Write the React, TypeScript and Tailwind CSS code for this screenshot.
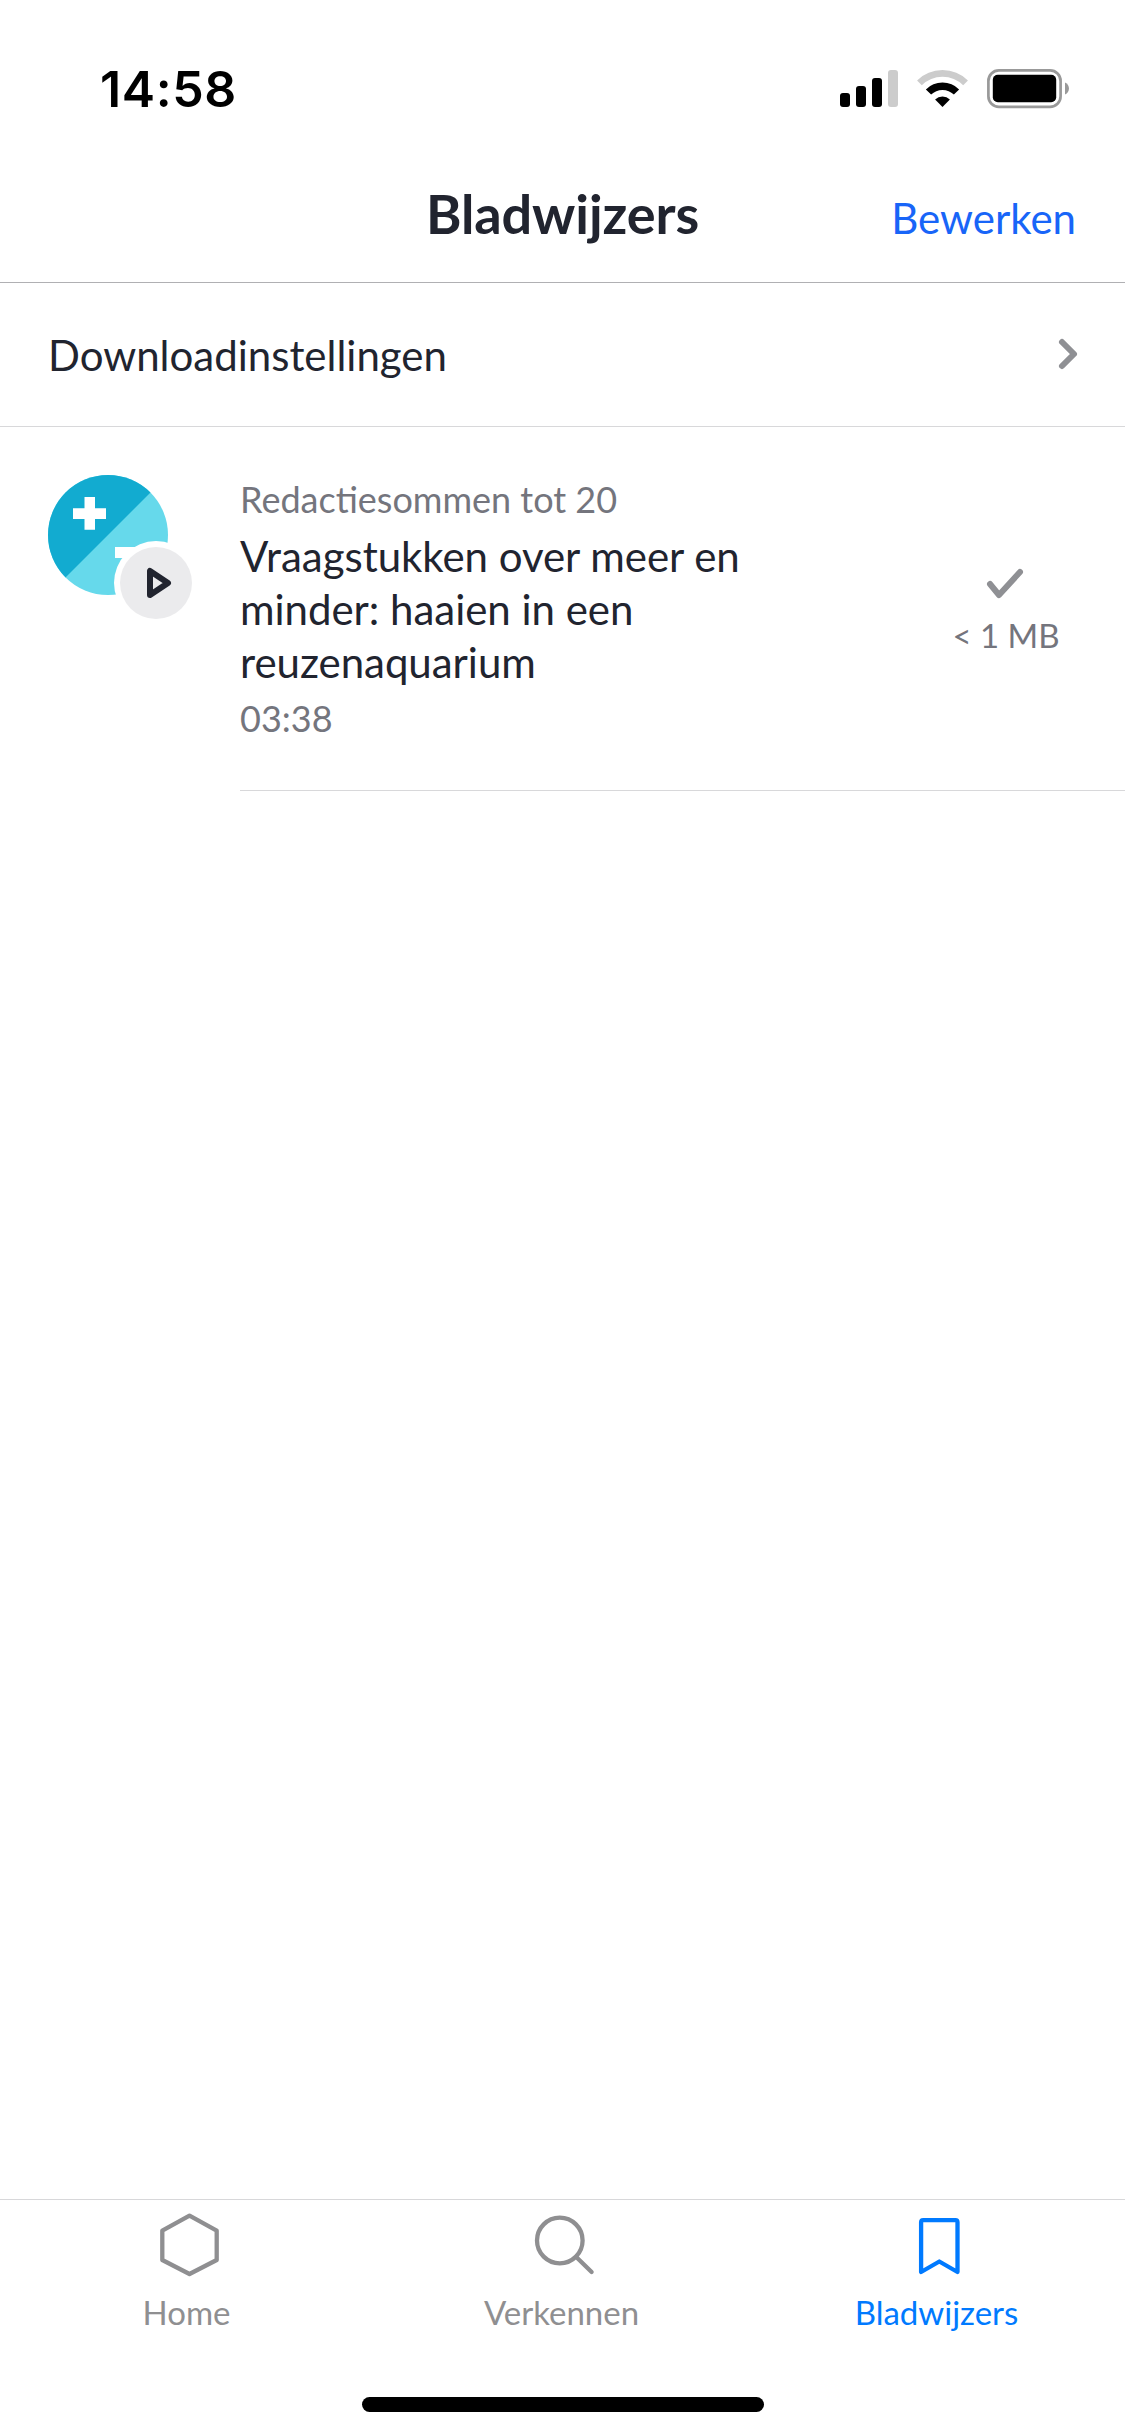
import type { ReactNode } from 'react';

function StatusBar() {
  return (
    <div className="flex h-[132px] shrink-0 items-start justify-between pl-[100px] pr-[55px] text-black">
      <span className="mt-[59px] font-['Inter',sans-serif] text-[50px] font-semibold leading-[60px] tracking-[0.6px]">14:58</span>
      <div className="mt-[69px] flex gap-[19px]">
        <svg width="58" height="40" viewBox="0 0 58 40">
          <rect x="0" y="24" width="10" height="14" rx="3" />
          <rect x="16" y="17" width="10" height="21" rx="3" />
          <rect x="32" y="9" width="10" height="29" rx="3" />
          <rect x="48" y="1" width="10" height="37" rx="3" fill="#cccccc" />
        </svg>
        <svg width="51" height="40" viewBox="0 0 51 40" fill="none">
          <path d="M2.45 13.95A32.6 32.6 0 0 1 48.55 13.95" stroke="#cccccc" strokeWidth="6.7" />
          <path d="M11.5 23A19.8 19.8 0 0 1 39.5 23" stroke="#000" strokeWidth="7.4" />
          <path d="M25.5 38L18.1 30.6A10.5 10.5 0 0 1 32.9 30.6Z" fill="#000" />
        </svg>
        <svg width="83" height="40" viewBox="0 0 83 40">
          <rect x="1.4" y="1.4" width="72.2" height="36.4" rx="10.5" fill="none" stroke="#999999" strokeWidth="2.7" />
          <rect x="5.8" y="5.8" width="63.4" height="27.4" rx="5" />
          <path d="M78 13.5C83.3 15.5 83.3 23.5 78 25.5Z" fill="#999999" />
        </svg>
      </div>
    </div>
  );
}

function Header() {
  return (
    <header className="grid h-[151px] shrink-0 grid-cols-3 items-start border-b border-[#b0b0b3] px-[48px] pt-[50px]">
      <h1 className="col-start-2 text-center text-[54px] font-bold leading-[64px] tracking-[-0.1px]">Bladwijzers</h1>
      <button className="mr-[1px] mt-[4px] text-right text-[42px] leading-[64px] text-[#1865f8]">Bewerken</button>
    </header>
  );
}

function DownloadSettings() {
  return (
    <div className="flex h-[144px] shrink-0 items-center justify-between border-b border-[#d8d8da] pl-[48px] pr-[45px] text-[42px]">
      <span className="mt-[1px]">Downloadinstellingen</span>
      <svg className="mb-[1px]" width="24" height="36" viewBox="0 0 24 36" fill="none" stroke="#8f9094" strokeWidth="6" strokeLinecap="round" strokeLinejoin="round">
        <path d="M6 6L18 18L6 30" />
      </svg>
    </div>
  );
}

function Artwork() {
  return (
    <svg className="shrink-0" width="150" height="150" viewBox="0 0 150 150">
      <clipPath id="disc">
        <circle cx="60" cy="60" r="60" />
      </clipPath>
      <g clipPath="url(#disc)">
        <rect width="120" height="120" fill="#66d9eb" />
        <path d="M0 0H120L0 120Z" fill="#12abd0" />
        <path d="M36.5 22H47V33.3H58V44H47V54.7H36.5V44H25V33.3H36.5Z" fill="#fff" />
        <rect x="67" y="72" width="33" height="11" fill="#fff" />
      </g>
      <circle cx="108" cy="108" r="42" fill="#fff" />
      <circle cx="108" cy="108" r="36" fill="#ebebed" />
      <path d="M102 96V120L120 108Z" fill="none" stroke="#21242f" strokeWidth="6" strokeLinejoin="round" />
    </svg>
  );
}

function BookmarkItem() {
  return (
    <article className="flex h-[364px] shrink-0 pl-[48px] pt-[48px]">
      <Artwork />
      <div className="ml-[42px] flex flex-1 border-b border-[#d8d8da]">
        <div className="mt-[2px] w-[600px] shrink-0">
          <p className="text-[36px] leading-[44px] text-[#74757d]">Redactiesommen tot 20</p>
          <h2 className="mt-[9px] text-[42px] leading-[53px] tracking-[-0.03px]">
            Vraagstukken over meer en
            <br />
            minder: haaien in een
            <br />
            reuzenaquarium
          </h2>
          <p className="mt-[7px] text-[36px] leading-[44px] text-[#74757d]">03:38</p>
        </div>
        <div className="ml-[96px] mt-[91px] flex w-[140px] flex-col items-center">
          <svg width="40" height="36" viewBox="0 0 40 36" fill="none" stroke="#8f9094" strokeWidth="6" strokeLinecap="round" strokeLinejoin="round">
            <path d="M4 18L13 29L34 6" />
          </svg>
          <span className="mt-[13px] text-[33px] leading-[40px] text-[#74757d]">&lt; 1 MB</span>
        </div>
      </div>
    </article>
  );
}

function Tab({ label, active, children }: { label: string; active?: boolean; children: ReactNode }) {
  return (
    <button className={`flex flex-1 flex-col items-center pt-[12px] ${active ? 'text-[#007aff]' : 'text-[#8f8f91]'}`}>
      <svg width="66" height="66" viewBox="0 0 66 66" fill="none" stroke="currentColor" strokeWidth="4.3" strokeLinecap="round" strokeLinejoin="round">
        {children}
      </svg>
      <span className="mr-[2px] mt-[14px] text-[33px] leading-[40px]">{label}</span>
    </button>
  );
}

export default function App() {
  return (
    <div className="flex h-[2436px] w-[1125px] flex-col bg-white font-['Lato',sans-serif] text-[#21242f]">
      <StatusBar />
      <Header />
      <DownloadSettings />
      <main className="flex-1">
        <BookmarkItem />
      </main>
      <nav className="flex h-[198px] shrink-0 items-start border-t border-[#d8d8da]">
        <Tab label="Home">
          <path d="M34.5 3.7L61.7 18.7V48L34.5 62L7.3 48V18.7Z" />
        </Tab>
        <Tab label="Verkennen">
          <circle cx="29.8" cy="28.5" r="22.8" />
          <path d="M46.5 45.2L61.6 60" />
        </Tab>
        <Tab label="Bladwijzers" active>
          <path d="M18.2 8.2H50.4Q52.5 8.2 52.5 10.3V60L34.3 49.5L16.1 60V10.3Q16.1 8.2 18.2 8.2Z" />
        </Tab>
      </nav>
      <div className="mb-[24px] ml-[362px] h-[15px] w-[402px] shrink-0 rounded-full bg-black" />
    </div>
  );
}
